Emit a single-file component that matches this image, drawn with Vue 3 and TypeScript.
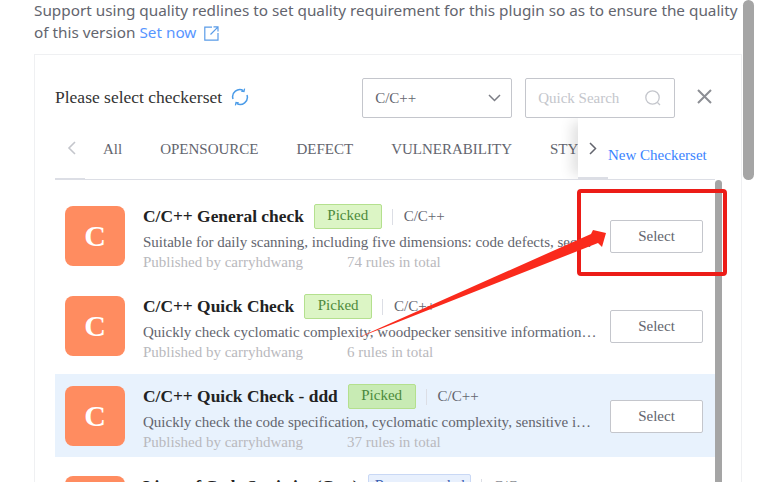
<script setup lang="ts">
interface Row {
  title: string
  tag: string
  tagKind: string
  desc: string
  rules: string
  active?: boolean
}
const tabs: string[] = ['All', 'OPENSOURCE', 'DEFECT', 'VULNERABILITY', 'STYLE']
const rows: Row[] = [
  { title: 'C/C++ General check', tag: 'Picked', tagKind: 'picked', desc: 'Suitable for daily scanning, including five dimensions: code defects, security vulnerabilities, code style and more', rules: '74 rules in total' },
  { title: 'C/C++ Quick Check', tag: 'Picked', tagKind: 'picked', desc: 'Quickly check cyclomatic complexity, woodpecker sensitive information and more checks of the code', rules: '6 rules in total' },
  { title: 'C/C++ Quick Check - ddd', tag: 'Picked', tagKind: 'picked', desc: 'Quickly check the code specification, cyclomatic complexity, sensitive information and more checks', rules: '37 rules in total', active: true },
  { title: 'Lines of Code Statistics (Cpp)', tag: 'Recommended', tagKind: 'rec', desc: 'Count the lines of code', rules: '1 rules in total' },
]
</script>

<template>
  <div class="page">
    <p class="intro">
      Support using quality redlines to set quality requirement for this plugin so as to ensure the quality of this version
      <a class="link">Set now</a>
      <svg class="ext" width="15" height="15" viewBox="0 0 15 15" fill="none" stroke="#5a9ce8" stroke-width="1.2">
        <path d="M8 1.1H.8V14.2H14V7" />
        <path d="M6.5 8.5 13.6 1.4M9.5 .9H14V5.4" />
      </svg>
    </p>

    <section class="panel">
      <header class="head">
        <span class="head-title">Please select checkerset</span>
        <svg class="refresh" width="18" height="18" viewBox="0 0 18 18" fill="none" stroke="#4a9be8" stroke-width="1.5">
          <path d="M2 11A7.2 7.2 0 0 1 12.5 2.6" />
          <path d="M16 7A7.2 7.2 0 0 1 5.5 15.4" />
          <path d="M13.6 .6 13 3.6 10.2 3.2M4.4 17.4 5 14.4 7.8 14.8" stroke-width="1.2" />
        </svg>
        <div class="select">
          <span>C/C++</span>
          <svg width="13" height="8" viewBox="0 0 13 8" fill="none" stroke="#7b7d85" stroke-width="1.5"><path d="M1 1 6.5 6.5 12 1" /></svg>
        </div>
        <div class="search">
          <span>Quick Search</span>
          <svg width="18" height="18" viewBox="0 0 18 18" fill="none" stroke="#c4c6cc" stroke-width="1.3">
            <circle cx="8.5" cy="8.5" r="6.7" /><path d="M13.5 13.5 16 16" />
          </svg>
        </div>
        <svg class="close" width="15" height="15" viewBox="0 0 15 15" stroke="#8c8e94" stroke-width="2"><path d="M1 1 14 14M14 1 1 14" /></svg>
      </header>

      <nav class="tabs">
        <svg class="prev" width="9" height="14" viewBox="0 0 9 14" fill="none" stroke="#c4c6cc" stroke-width="1.6"><path d="M8 1 2 7 8 13" /></svg>
        <span v-for="t in tabs" :key="t" class="tab">{{ t }}</span>
        <div class="tabs-end">
          <svg width="8" height="13" viewBox="0 0 8 13" fill="none" stroke="#63656e" stroke-width="1.5"><path d="M1 1 6.5 6.5 1 12" /></svg>
          <a class="new">New Checkerset</a>
          <i class="end-line"></i>
        </div>
      </nav>

      <div class="list">
        <article v-for="r in rows" :key="r.title" class="row" :class="{ active: r.active }">
          <div class="logo">C</div>
          <div class="info">
            <div class="line1">
              <strong class="name" :class="{ tight: r.tagKind === 'rec' }">{{ r.title }}</strong>
              <span class="tag" :class="r.tagKind">{{ r.tag }}</span>
              <i class="sep"></i>
              <span class="lang">C/C++</span>
            </div>
            <div class="desc">{{ r.desc }}</div>
            <div class="meta"><span class="by">Published by carryhdwang</span><span>{{ r.rules }}</span></div>
          </div>
          <button class="btn">Select</button>
        </article>
      </div>
    </section>

    <div class="page-bar"></div>
    <div class="list-bar"></div>
    <div class="mark"></div>
    <svg class="arrow" width="270" height="120" viewBox="0 0 270 120">
      <path d="M0 113 236 8 238 4 251 7 247 21 243 17Z" fill="#fa2a1c" />
    </svg>
  </div>
</template>

<style>
html, body { margin: 0; background: #fff; overflow: hidden; }
</style>

<style scoped>
.page {
  position: relative;
  width: 761px;
  height: 482px;
  overflow: hidden;
  padding-left: 34px;
  box-sizing: border-box;
  font-family: "Liberation Serif", serif;
}
.intro {
  margin: -1px 0 0;
  width: 712px;
  height: 54px;
  box-sizing: border-box;
  font: 15.3px/22px "Noto Sans", sans-serif;
  color: #63656e;
}
.link { color: #3a84ff; opacity: .85; }
.ext { vertical-align: -3px; margin-left: 8px; }
.panel {
  width: 708px;
  height: 440px;
  margin-top: 1px;
  box-sizing: border-box;
  border: 1px solid #eff0f2;
  border-bottom: 0;
  padding: 0 20px;
}
.head {
  display: flex;
  align-items: center;
  height: 40px;
  margin-top: 23px;
}
.head-title { font-size: 17.5px; color: #333; margin-top: -2px; }
.refresh { margin-left: 9px; margin-top: -2px; }
.select, .search {
  display: flex;
  align-items: center;
  justify-content: space-between;
  box-sizing: border-box;
  height: 40px;
  border: 1px solid #c4c6cc;
  border-radius: 2px;
  font-size: 15px;
  padding: 0 12px;
}
.select { width: 150px; margin-left: 113px; color: #63656e; padding-right: 10px; }
.search { width: 150px; margin-left: 13px; color: #c4c6cc; }
.close { margin: -3px 0 0 22px; }
.tabs {
  position: relative;
  display: flex;
  align-items: center;
  height: 62px;
  border-bottom: 1px solid #dcdee5;
  font-size: 15px;
  color: #63656e;
  overflow: hidden;
  width: 660px;
  box-sizing: border-box;
  padding-top: 2px;
}
.tabs::before {
  content: "";
  position: absolute;
  left: 0; bottom: -1px;
  width: 30px; height: 2px;
  background: #dcdee5;
}
.prev { margin: -3px 27px 0 12px; flex: none; }
.tab { margin-right: 38px; flex: none; white-space: nowrap; }
.tabs-end {
  position: absolute;
  right: 0; top: 0; bottom: 0;
  width: 137px;
  background: #fff;
  box-shadow: -10px 0 12px -4px rgba(0,0,0,.12);
  font-size: 15px;
}
.tabs-end svg { position: absolute; left: 11px; top: 24px; }
.new { position: absolute; left: 30px; top: 29px; color: #3a84ff; white-space: nowrap; }
.end-line { position: absolute; left: 0; bottom: 0; width: 30px; height: 2px; background: #dcdee5; }
.list { display: flex; flex-direction: column; gap: 7px; margin-top: 14px; width: 660px; }
.row {
  flex: none;
  display: flex;
  align-items: center;
  height: 83px;
  box-sizing: border-box;
  padding: 0 12px 0 10px;
}
.row.active { background: #e8f2fd; }
.logo {
  flex: none;
  width: 60px; height: 60px;
  border-radius: 8px;
  background: #ff8c60;
  color: #fff;
  font: bold 30px/60px "Liberation Serif", serif;
  text-align: center;
}
.info { flex: 1; min-width: 0; margin: 5px 0 0 18px; }
.line1 { display: flex; align-items: center; height: 24px; }
.name { font-size: 17.4px; color: #222; white-space: nowrap; }
.name.tight { letter-spacing: -.2px; }
.tag {
  box-sizing: border-box;
  height: 25px;
  line-height: 21px;
  border: 1px solid;
  border-radius: 2px;
  font-size: 15px;
  padding: 0 12.5px;
  margin-left: 10px;
  white-space: nowrap;
}
.picked { background: #dcf5c5; border-color: #b4e08e; color: #4d8a3c; }
.active .picked { background: #c8ebb4; }
.rec { background: #e8f0fd; border-color: #c9d8f5; color: #3a5fb0; padding: 0 5.5px; }
.sep { width: 1px; height: 16px; background: #dcdee5; margin: 0 11px 0 10px; }
.lang { font-size: 15px; color: #63656e; }
.desc {
  margin-top: 3px;
  font-size: 15px;
  line-height: 20px;
  color: #63656e;
  white-space: nowrap;
  overflow: hidden;
  text-overflow: ellipsis;
  width: 454px;
}
.meta { font-size: 15px; line-height: 20px; color: #b9b9bd; }
.by { display: inline-block; width: 204px; white-space: nowrap; }
.btn {
  flex: none;
  width: 93px; height: 33px;
  margin: 2px 0 0 15px;
  background: #fff;
  border: 1px solid #c4c6cc;
  border-radius: 2px;
  font: 15px "Liberation Serif", serif;
  color: #63656e;
}
.page-bar {
  position: absolute;
  left: 743px; top: 0;
  width: 11px; height: 180px;
  background: #a5a5a5;
  border-radius: 6px;
}
.list-bar {
  position: absolute;
  left: 715px; top: 180px;
  width: 7px; height: 302px;
  background: #a5a5a5;
  border-radius: 4px 4px 0 0;
}
.mark {
  position: absolute;
  left: 577px; top: 189px;
  width: 150px; height: 87px;
  box-sizing: border-box;
  border: 4px solid #ec1c17;
  border-radius: 4px;
}
.arrow { position: absolute; left: 355px; top: 226px; }
</style>
